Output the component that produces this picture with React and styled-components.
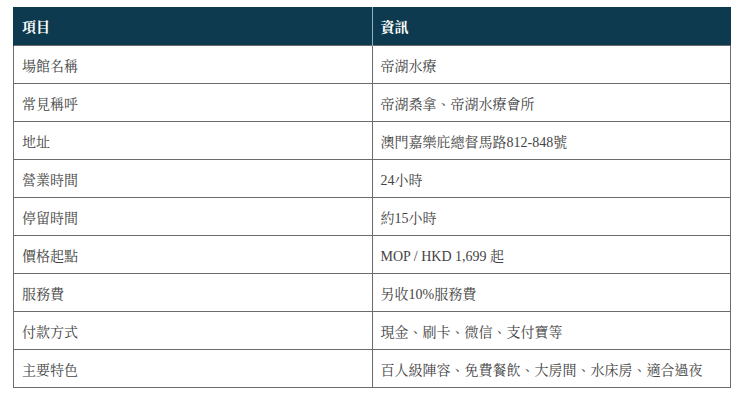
import React from "react";
import styled, { createGlobalStyle } from "styled-components";

const rows = [
  ["場館名稱", "帝湖水療"],
  ["常見稱呼", "帝湖桑拿、帝湖水療會所"],
  ["地址", "澳門嘉樂庇總督馬路812-848號"],
  ["營業時間", "24小時"],
  ["停留時間", "約15小時"],
  ["價格起點", "MOP / HKD 1,699 起"],
  ["服務費", "另收10%服務費"],
  ["付款方式", "現金、刷卡、微信、支付寶等"],
  ["主要特色", "百人級陣容、免費餐飲、大房間、水床房、適合過夜"],
];

const GlobalStyle = createGlobalStyle`
  body {
    margin: 0;
    background: #fff;
    font-family: "Liberation Serif", "Noto Serif CJK TC", "Noto Sans CJK TC", serif;
  }
`;

const Page = styled.div`
  padding: 7px 9px 0 13px;
`;

const Table = styled.table`
  width: 100%;
  border-collapse: collapse;
  table-layout: fixed;
  font-size: 14px;
`;

const HeadCell = styled.th`
  background: #0d3a4e;
  color: #fff;
  font-weight: 700;
  text-align: left;
  height: 38px;
  padding: 0 8px;
  border-left: 1px solid ${(p) => (p.$first ? "#0d3a4e" : "#8fb3c4")};
`;

const Cell = styled.td`
  color: #444;
  height: 37px;
  padding: 0 8px;
  border: 1px solid #6b6b6b;
  vertical-align: middle;
`;

export default function App() {
  return (
    <>
      <GlobalStyle />
      <Page>
        <Table>
          <thead>
            <tr>
              <HeadCell $first>項目</HeadCell>
              <HeadCell>資訊</HeadCell>
            </tr>
          </thead>
          <tbody>
            {rows.map(([k, v]) => (
              <tr key={k}>
                <Cell>{k}</Cell>
                <Cell>{v}</Cell>
              </tr>
            ))}
          </tbody>
        </Table>
      </Page>
    </>
  );
}
